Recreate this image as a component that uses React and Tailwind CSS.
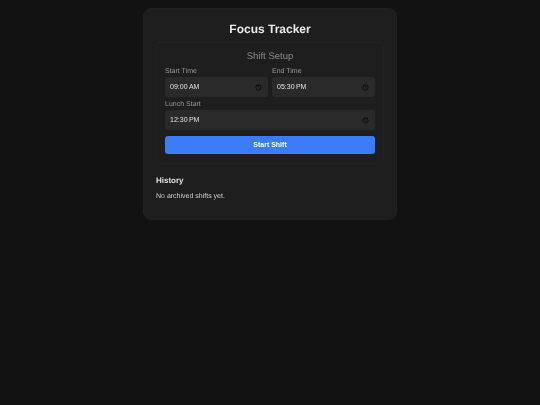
import React from 'react';

function TimeField({ label, value }) {
  return (
    <label className="flex flex-col gap-[1px] flex-1 min-w-0">
      <span className="text-[7px] leading-[9px] text-[#999999]">{label}</span>
      <input
        type="time"
        defaultValue={value}
        className="w-full h-[20px] rounded-[3px] bg-[#2a2a2a] pl-[5px] pr-[6.5px] text-[7px] text-[#e0e0e0] outline-none [&::-webkit-datetime-edit-hour-field]:p-0 [&::-webkit-datetime-edit-minute-field]:p-0 [&::-webkit-datetime-edit-ampm-field]:p-0 [&::-webkit-calendar-picker-indicator]:p-0 [&::-webkit-calendar-picker-indicator]:w-[7px] [&::-webkit-calendar-picker-indicator]:h-[7px]"
      />
    </label>
  );
}

export default function App() {
  return (
    <div className="min-h-[405px] bg-[#121212] flex justify-center items-start pt-2 [text-rendering:geometricPrecision] font-['Liberation_Sans',Arial,sans-serif]">
      <div className="w-[254px] h-[212px] rounded-lg bg-[#1e1e1e] border border-[#212121] px-[12px] pt-[12px] [will-change:transform]">
        <h1 className="text-[12px] leading-[16px] font-bold text-center text-[#e8e8e8]">Focus Tracker</h1>
        <div className="mt-[5px] border border-dotted border-[#272727] rounded-[3px] px-[8px] pt-[8px] pb-[8px]">
          <h2 className="text-[9.5px] leading-[12px] text-center text-[#8a8a8a]">Shift Setup</h2>
          <div className="flex gap-[4px] mt-[4px]">
            <TimeField label="Start Time" value="09:00" />
            <TimeField label="End Time" value="17:30" />
          </div>
          <div className="mt-[3px]">
            <TimeField label="Lunch Start" value="12:30" />
          </div>
          <button className="w-full h-[18px] mt-[6px] rounded-[3px] bg-[#3b7cff] text-[7px] font-bold text-white">Start Shift</button>
        </div>
        <h3 className="mt-[12px] text-[8px] leading-[10px] font-bold text-[#e0e0e0]">History</h3>
        <p className="mt-[6px] text-[7px] leading-[9px] text-[#d0d0d0]">No archived shifts yet.</p>
      </div>
    </div>
  );
}
